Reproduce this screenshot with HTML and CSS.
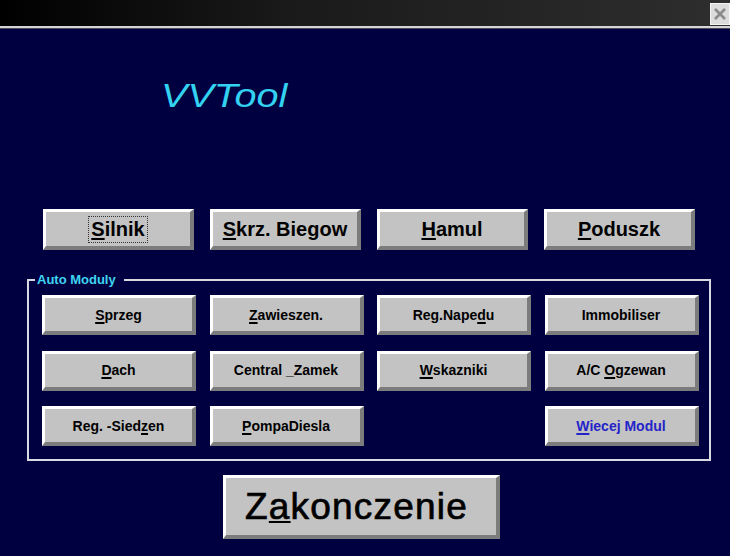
FILE: index.html
```html
<!DOCTYPE html>
<html>
<head>
<meta charset="utf-8">
<link rel="stylesheet" href="styles.css">
</head>
<body>
<div class="titlebar">
  <div class="close">
    <svg width="14" height="14" viewBox="0 0 14 14"><path d="M2 2 L12 12 M12 2 L2 12" stroke="#8a8a8a" stroke-width="2.6" fill="none"/></svg>
  </div>
</div>
<div class="window">
  <div class="logo"><span class="logo-text">VVTool</span></div>

  <div class="row-main">
    <button class="btn btn-lg"><span class="focus"><u>S</u>ilnik</span></button>
    <button class="btn btn-lg"><span><u>S</u>krz. Biegow</span></button>
    <button class="btn btn-lg"><span><u>H</u>amul</span></button>
    <button class="btn btn-lg"><span><u>P</u>oduszk</span></button>
  </div>

  <fieldset class="group">
    <legend class="group-label">Auto Moduly</legend>
    <div class="grid">
      <button class="btn btn-sm"><span><u>S</u>przeg</span></button>
      <button class="btn btn-sm"><span><u>Z</u>awieszen.</span></button>
      <button class="btn btn-sm"><span>Reg.Nape<u>d</u>u</span></button>
      <button class="btn btn-sm"><span>Immobiliser</span></button>
      <button class="btn btn-sm"><span><u>D</u>ach</span></button>
      <button class="btn btn-sm"><span>Central _Zamek</span></button>
      <button class="btn btn-sm"><span><u>W</u>skazniki</span></button>
      <button class="btn btn-sm"><span>A/C <u>O</u>gzewan</span></button>
      <button class="btn btn-sm"><span>Reg. -Sied<u>z</u>en</span></button>
      <button class="btn btn-sm"><span><u>P</u>ompaDiesla</span></button>
      <div class="empty"></div>
      <button class="btn btn-sm btn-blue"><span><u>W</u>iecej Modul</span></button>
    </div>
  </fieldset>

  <button class="btn btn-exit"><span>Z<u>a</u>konczenie</span></button>
</div>
</body>
</html>
```
FILE: styles.css
```css
html, body {
  margin: 0;
  padding: 0;
}
body {
  width: 730px;
  height: 556px;
  overflow: hidden;
  background: #000040;
  font-family: "Liberation Sans", Arial, sans-serif;
}
.titlebar {
  height: 26px;
  background: linear-gradient(to right, #000000 0%, #1a1a1a 40%, #2e2e2e 100%);
  border-bottom: 2px solid #d4d4d4;
  display: flex;
  justify-content: flex-end;
  align-items: flex-start;
}
.close {
  width: 18px;
  height: 20px;
  margin-top: 3px;
  background: #dcdcdc;
  border: 1px solid #f4f4f4;
  display: flex;
  align-items: center;
  justify-content: center;
}
.window {
  height: 527px;
  background: #000040;
  border-top: 1px solid #4a4a5a;
}
.logo {
  margin: 49px 0 0 161px;
  height: 36px;
}
.logo-text {
  display: inline-block;
  font-size: 33px;
  line-height: 36px;
  font-style: italic;
  color: #33d2f0;
  transform: scaleX(1.2);
  transform-origin: left center;
}
.btn {
  box-sizing: border-box;
  margin: 0;
  padding: 0;
  background: #c3c3c3;
  border-style: solid;
  border-width: 3px 4px 4px 3px;
  border-color: #ffffff #7c7c7c #7c7c7c #ffffff;
  color: #000;
  font-family: "Liberation Sans", Arial, sans-serif;
  font-weight: bold;
  display: flex;
  align-items: center;
  justify-content: center;
  white-space: pre;
}
.btn u {
  text-decoration-thickness: 2px;
  text-underline-offset: 2px;
}
.row-main {
  margin: 95px 0 0 43px;
  display: grid;
  grid-template-columns: repeat(4, 151px);
  column-gap: 16px;
}
.btn-lg {
  height: 41px;
  font-size: 20px;
}
.focus {
  border: 1px dotted #333;
  padding: 2px 2px;
  line-height: 21px;
}
.group {
  box-sizing: border-box;
  margin: 22px 0 0 27px;
  width: 684px;
  min-width: 0;
  padding: 0;
  border: 2px solid #d8d8e0;
}
.group-label {
  margin-left: 6px;
  padding: 0 8px 0 2px;
  font-size: 13px;
  line-height: 15px;
  font-weight: bold;
  color: #3fd5f0;
}
.grid {
  margin: 8px 13px 13px 13px;
  display: grid;
  grid-template-columns: repeat(4, 154px);
  column-gap: 13.5px;
  row-gap: 15.5px;
}
.btn-sm {
  height: 40px;
  font-size: 14px;
}
.btn-blue {
  color: #2424c8;
}
.btn-exit {
  margin: 14px 0 0 223px;
  width: 277px;
  height: 64px;
  font-size: 37px;
  font-weight: normal;
  letter-spacing: 1.2px;
  justify-content: flex-start;
  padding-left: 19px;
  -webkit-text-stroke: 0.7px #000;
}
```
